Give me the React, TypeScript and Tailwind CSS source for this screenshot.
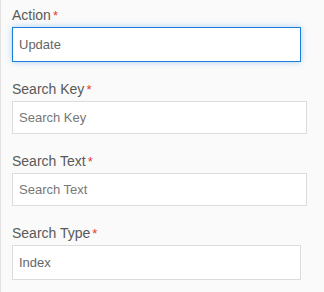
import React from 'react'

interface Field {
  label: string
  value?: string
  placeholder?: string
  width: string
  height: string
  focused?: boolean
}

const FIELDS: Field[] = [
  { label: 'Action', value: 'Update', width: 'w-[289px]', height: 'h-[35px]', focused: true },
  { label: 'Search Key', placeholder: 'Search Key', width: 'w-[295px]', height: 'h-[33px]' },
  { label: 'Search Text', placeholder: 'Search Text', width: 'w-[295px]', height: 'h-[33px]' },
  { label: 'Search Type', value: 'Index', width: 'w-[289px]', height: 'h-[35px]' },
]

export default function App() {
  return (
    <div className="w-[324px] h-[292px] bg-[#fafafa] border-l border-[#e2e2e2] overflow-hidden font-['Liberation_Sans',Arial,sans-serif]">
      <div className="pl-[11px] pt-[5px] flex flex-col gap-[17px]">
        {FIELDS.map(f => (
          <div key={f.label}>
            <label className="flex items-start h-[20px] leading-[20px] text-[14px] text-[#595959]">
              {f.label}
              <span className="ml-[2px] mt-[3px] text-[13px] leading-[16px] text-[#e53935]">*</span>
            </label>
            <div
              className={`mt-[2px] ${f.width} ${f.height} bg-white flex items-center px-[6px] text-[13px] ${
                f.focused
                  ? 'border border-[#1a7fdc] shadow-[0_0_6px_rgba(26,127,220,0.35)]'
                  : 'border border-[#dcdcdc]'
              }`}
            >
              <span className={f.value ? 'text-[#666]' : 'text-[#777]'}>{f.value ?? f.placeholder}</span>
            </div>
          </div>
        ))}
      </div>
    </div>
  )
}
